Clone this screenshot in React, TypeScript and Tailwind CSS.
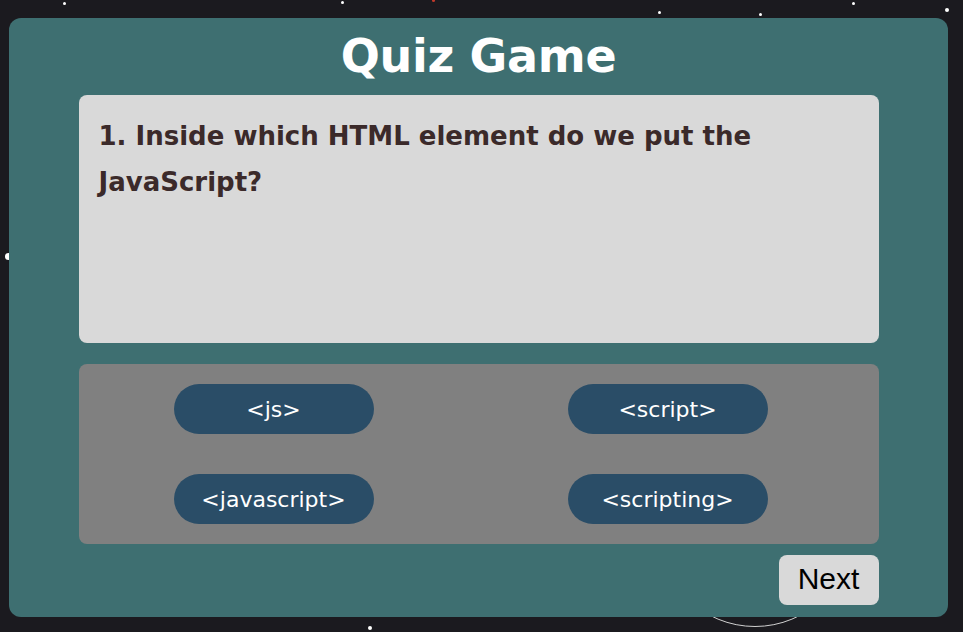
import React from "react";

const stars: { x: number; y: number; s: number; c?: string }[] = [
  { x: 63, y: 2, s: 3 },
  { x: 341, y: 1, s: 3 },
  { x: 432, y: -1, s: 3, c: "#c0392b" },
  { x: 658, y: 11, s: 3 },
  { x: 759, y: 13, s: 3 },
  { x: 852, y: 2, s: 3 },
  { x: 945, y: 8, s: 4 },
  { x: 5, y: 253, s: 7 },
  { x: 368, y: 626, s: 4 },
];

const font = "'DejaVu Sans', 'Noto Sans', sans-serif";

export default function App() {
  const answers = ["<js>", "<script>", "<javascript>", "<scripting>"];
  return (
    <div className="relative w-[963px] h-[632px] overflow-hidden bg-[#1b1a1f]" style={{ fontFamily: font }}>
      {stars.map((s, i) => (
        <div
          key={i}
          className="absolute rounded-full"
          style={{ left: s.x, top: s.y, width: s.s, height: s.s, background: s.c ?? "#ffffff" }}
        />
      ))}
      <div className="absolute left-[658px] top-[433px] w-[194px] h-[194px] rounded-full border border-[#d0d0d0]" />
      <div className="relative ml-[9px] pt-[18px] w-[939px]">
        <div className="h-[599px] rounded-[12px] bg-[#3e6f71] flex flex-col items-center">
          <div className="h-[77px] flex items-center justify-center pb-[2px]">
            <h1 className="text-white font-bold text-[46px] leading-none tracking-[-0.3px]">Quiz Game</h1>
          </div>
          <div className="w-[800px] h-[248px] rounded-[8px] bg-[#d9d9d9] pl-[20px] pr-[20px] pt-[18px]">
            <p className="text-[#3b2a2a] font-bold text-[26px] leading-[46px]">
              1. Inside which HTML element do we put the JavaScript?
            </p>
          </div>
          <div className="mt-[21px] w-[800px] h-[180px] rounded-[8px] bg-[#808080] grid grid-cols-[200px_200px] gap-x-[194px] gap-y-[40px] pl-[95px] pt-[20px] content-start">
            {answers.map((a) => (
              <button
                key={a}
                className="h-[50px] w-[200px] rounded-full bg-[#2a4d67] text-white text-[22px] flex items-center justify-center"
              >
                {a}
              </button>
            ))}
          </div>
          <div className="w-[800px] flex justify-end mt-[11px]">
            <button
              className="w-[100px] h-[50px] rounded-[8px] bg-[#d9d9d9] text-black text-[30px] flex items-center justify-center pb-[3px]"
              style={{ fontFamily: "'Liberation Sans', Arial, sans-serif" }}
            >
              Next
            </button>
          </div>
        </div>
      </div>
    </div>
  );
}
